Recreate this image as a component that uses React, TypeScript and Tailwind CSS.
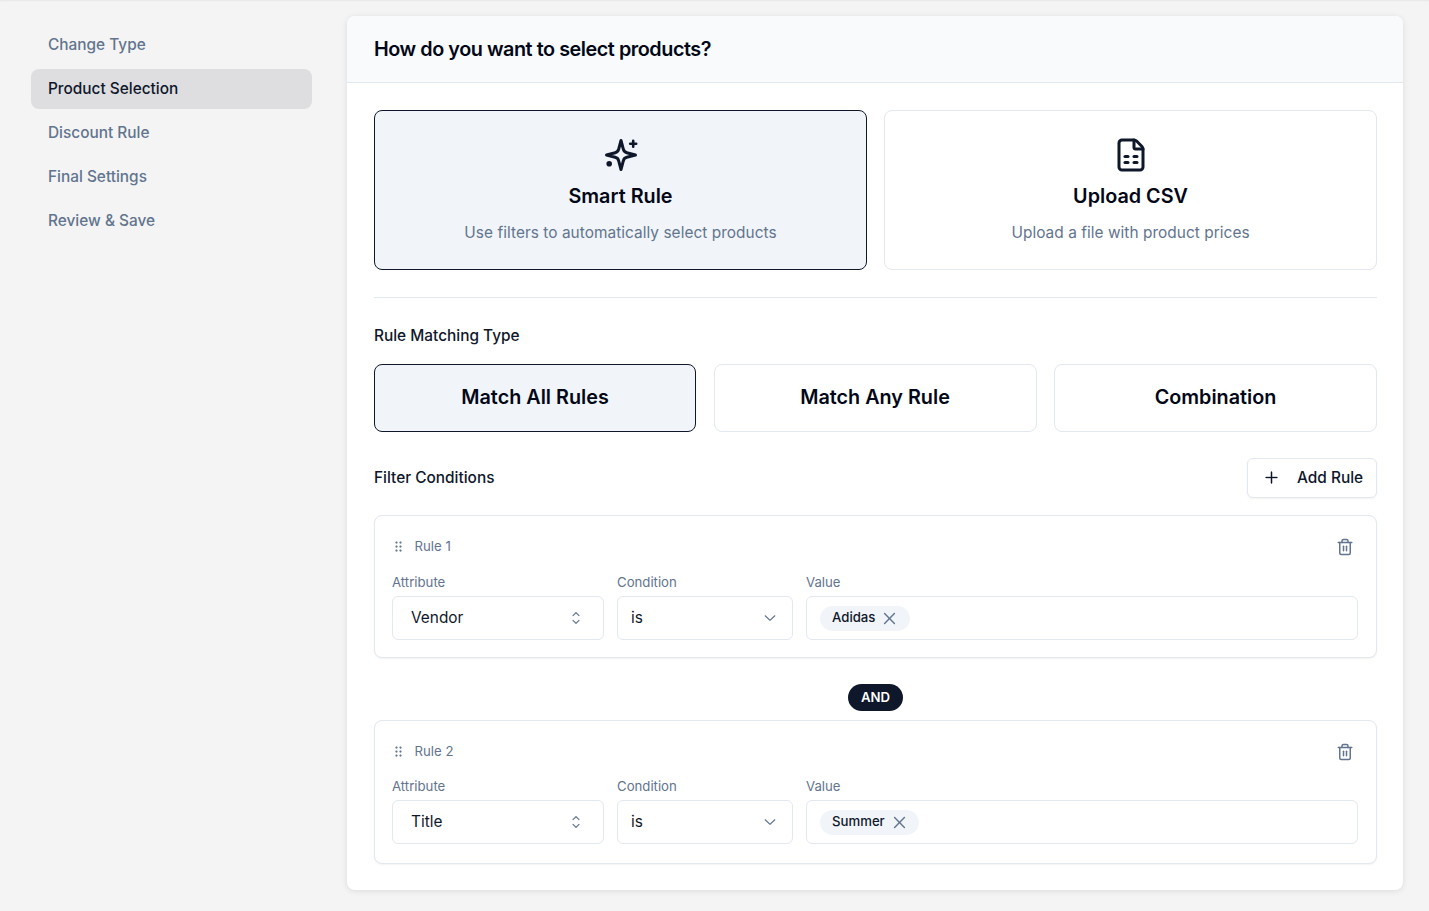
import { FileSpreadsheet, Trash2 } from "lucide-react";
import { RxCaretSort, RxChevronDown, RxCross2, RxDragHandleDots2, RxPlus } from "react-icons/rx";

const steps = ["Change Type", "Product Selection", "Discount Rule", "Final Settings", "Review & Save"];

function SparkleIcon() {
	return (
		<svg width="36" height="36" viewBox="0 0 36 36" className="text-slate-900">
			<path
				d="M18 3.5 L20.3 12.2 Q21 15 23.8 15.7 L32.5 18 L23.8 20.3 Q21 21 20.3 23.8 L18 32.5 L15.7 23.8 Q15 21 12.2 20.3 L3.5 18 L12.2 15.7 Q15 15 15.7 12.2 Z"
				fill="none"
				stroke="currentColor"
				strokeWidth="3"
				strokeLinejoin="round"
			/>
			<path d="M30.2 3.8v6M27.2 6.8h6" fill="none" stroke="currentColor" strokeWidth="2.6" strokeLinecap="round" />
			<circle cx="6.2" cy="26.8" r="2.8" fill="currentColor" />
		</svg>
	);
}

function OptionCard({ title, text, active, icon }: { title: string; text: string; active?: boolean; icon: React.ReactNode }) {
	return (
		<div
			className={`flex h-[160px] flex-col items-center rounded-lg border pt-[26px] ${active ? "border-slate-900 bg-slate-100" : "border-slate-200 bg-white"}`}
		>
			{icon}
			<h3 className="mt-[9px] text-[19.8px] leading-[28px] font-semibold text-[#020817]">{title}</h3>
			<p className="mt-[11px] text-[15.4px] leading-[24px] tracking-[0.05px] text-slate-500">{text}</p>
		</div>
	);
}

function MatchButton({ label, active }: { label: string; active?: boolean }) {
	return (
		<div
			className={`flex h-[68px] items-center justify-center rounded-lg border pb-[1px] text-[19.8px] font-semibold text-[#020817] ${active ? "border-slate-900 bg-slate-100" : "border-slate-200 bg-white"}`}
		>
			{label}
		</div>
	);
}

function RuleCard({ name, attribute, value, className, fieldsClass }: { name: string; attribute: string; value: string; className: string; fieldsClass: string }) {
	return (
		<div className={`rounded-lg border border-slate-200 bg-white pt-[21px] pr-[18px] pl-[17px] shadow-[0_1px_2px_rgba(0,0,0,0.05)] ${className}`}>
			<div className="flex h-[20px] items-center justify-between">
				<div className="flex items-center">
					<RxDragHandleDots2 size={15} className="-ml-[1px] text-slate-500" />
					<span className="ml-[8.5px] text-[13.2px] text-slate-500">{name}</span>
				</div>
				<Trash2 size={18} className="mr-[4px] text-slate-500" />
			</div>
			<div className={`grid grid-cols-[212px_176px_1fr] gap-x-[13px] ${fieldsClass}`}>
				<label className="text-[13.2px] leading-[20px] text-slate-500">Attribute</label>
				<label className="text-[13.2px] leading-[20px] text-slate-500">Condition</label>
				<label className="text-[13.2px] leading-[20px] text-slate-500">Value</label>
				<div className="mt-[4px] flex h-[44px] items-center justify-between rounded-md border border-slate-200 bg-white pr-[17px] pl-[18px] text-[15.4px] text-slate-900">
					{attribute}
					<RxCaretSort size={20} className="text-slate-500" />
				</div>
				<div className="mt-[4px] flex h-[44px] items-center justify-between rounded-md border border-slate-200 bg-white pr-[13px] pl-[13px] text-[15.4px] text-slate-900">
					is
					<RxChevronDown size={18} className="mb-[2px] text-slate-500" />
				</div>
				<div className="mt-[4px] flex h-[44px] items-center rounded-md border border-slate-200 bg-white px-[13px]">
					<span className="flex h-[25px] items-center gap-[5px] rounded-full bg-slate-100 pr-[10.5px] pl-[12px] text-[13.2px] font-medium text-slate-900">
						{value}
						<RxCross2 size={19} className="text-slate-500" />
					</span>
				</div>
			</div>
		</div>
	);
}

export default function App() {
	return (
		<div className="flex min-h-[911px] bg-[#f4f4f5] font-['Inter',sans-serif] shadow-[inset_0_2px_2px_-1px_rgba(0,0,0,0.06)]">
			<aside className="w-[347px] shrink-0 pt-[25px] pr-[35px] pl-[31px]">
				<nav className="flex flex-col gap-[4px]">
					{steps.map((step) => (
						<div
							key={step}
							className={`flex h-[40px] items-center rounded-lg px-[17px] text-[15.4px] font-medium ${step === "Product Selection" ? "bg-[#dedee0] text-slate-900" : "text-slate-500"}`}
						>
							{step}
						</div>
					))}
				</nav>
			</aside>

			<main className="mt-[16px] mb-[21px] h-[874px] w-[1056px] rounded-lg bg-white shadow-[0_1px_6px_rgba(0,0,0,0.1)]">
				<header className="flex h-[67px] items-center rounded-t-lg border-b border-slate-200 bg-slate-50 px-[27px] pt-[1px]">
					<h1 className="text-[19.8px] font-semibold tracking-[-0.45px] text-[#020817]">How do you want to select products?</h1>
				</header>

				<div className="pt-[27px] pr-[26px] pl-[27px]">
					<div className="grid grid-cols-2 gap-[17px]">
						<OptionCard active title="Smart Rule" text="Use filters to automatically select products" icon={<SparkleIcon />} />
						<OptionCard
							title="Upload CSV"
							text="Upload a file with product prices"
							icon={<FileSpreadsheet size={36} className="text-slate-900" />}
						/>
					</div>

					<div className="mt-[27px] border-t border-slate-200" />

					<h2 className="mt-[28px] text-[15.4px] leading-[20px] font-medium text-slate-900">Rule Matching Type</h2>
					<div className="mt-[18px] grid grid-cols-[322px_1fr_1fr] gap-[17.5px]">
						<MatchButton active label="Match All Rules" />
						<MatchButton label="Match Any Rule" />
						<MatchButton label="Combination" />
					</div>

					<div className="mt-[26px] flex items-center justify-between">
						<h2 className="text-[15.4px] font-medium text-slate-900">Filter Conditions</h2>
						<div className="flex h-[40px] w-[130px] items-center rounded-md border border-slate-200 bg-white pl-[14.5px] text-[15.4px] font-medium text-slate-900 shadow-[0_1px_2px_rgba(0,0,0,0.05)]">
							<RxPlus size={17} stroke="currentColor" strokeWidth={0.3} className="mb-[1px]" />
							<span className="ml-[17.5px]">Add Rule</span>
						</div>
					</div>

					<RuleCard className="mt-[17px] h-[143px]" fieldsClass="mt-[15px]" name="Rule 1" attribute="Vendor" value="Adidas" />

					<div className="mt-[26px] flex justify-center">
						<span className="flex h-[27px] w-[55px] items-center justify-center rounded-full bg-slate-900 text-[13.2px] font-semibold text-white">
							AND
						</span>
					</div>

					<RuleCard className="mt-[9px] h-[144px]" fieldsClass="mt-[14px]" name="Rule 2" attribute="Title" value="Summer" />
				</div>
			</main>
		</div>
	);
}
